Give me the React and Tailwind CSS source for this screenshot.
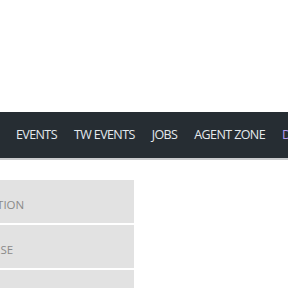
import React from 'react';

const navItems = ['EVENTS', 'TW EVENTS', 'JOBS', 'AGENT ZONE'];

const sideItems = [
  { label: 'REGISTRATION', offset: '-ml-[55px]' },
  { label: 'LICENSE', offset: '-ml-[31px]' },
  { label: 'RENEWAL', offset: '-ml-[40px]' },
];

const App = () => {
  return (
    <div className="w-[288px] h-[288px] overflow-hidden bg-white" style={{ fontFamily: '"Open Sans", sans-serif' }}>
      {/* Top spacer */}
      <div className="h-[112px]" />

      {/* Nav bar */}
      <div className="h-[46px] bg-[#262d33] flex items-center pl-[16px] whitespace-nowrap">
        {navItems.map((item) => (
          <span key={item} className="text-[12.5px] tracking-[-0.6px] text-[#e4eaee] mr-[17px]">
            {item}
          </span>
        ))}
        <span className="text-[12.5px] tracking-[-0.6px] text-[#b89cf0]">DONATE</span>
      </div>
      <div className="h-[2px] bg-[#c9cbcd]" />

      {/* Side menu */}
      <div className="mt-[20px] w-[134px] bg-[#e2e2e2] overflow-hidden">
        {sideItems.map((item) => (
          <div
            key={item.label}
            className="h-[45px] pt-[7px] flex items-center border-b-2 border-white whitespace-nowrap"
          >
            <span className={`${item.offset} text-[11.5px] text-[#8a8a8a]`}>{item.label}</span>
          </div>
        ))}
      </div>
    </div>
  );
};

export default App;
